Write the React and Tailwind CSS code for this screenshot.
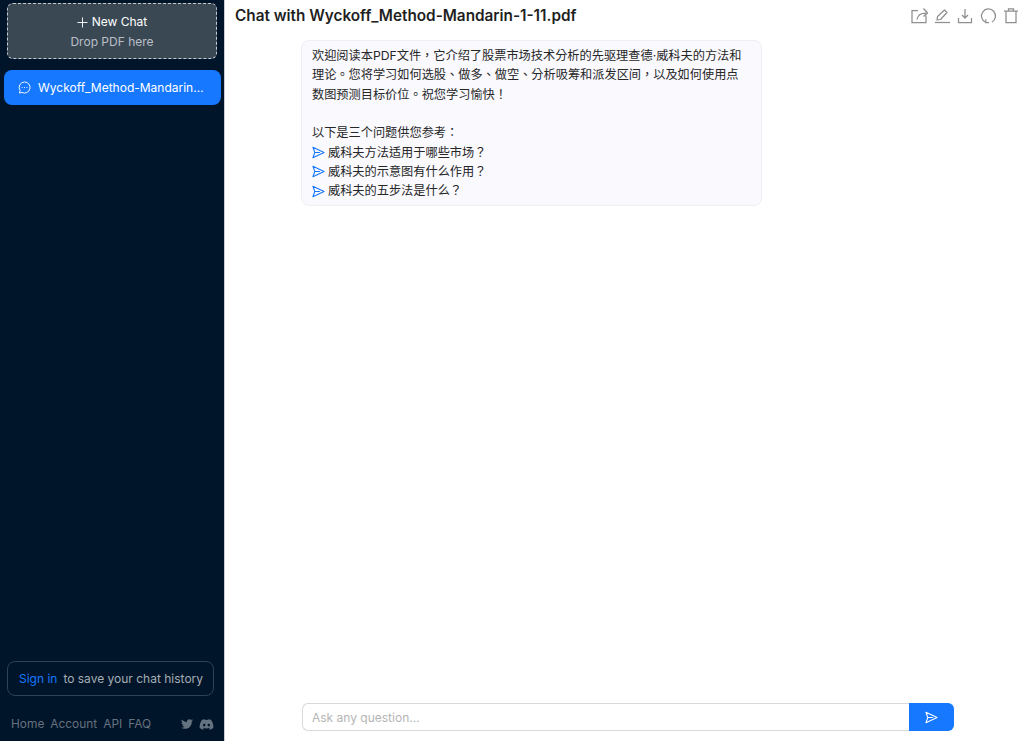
import React from 'react';
import { FaTwitter, FaDiscord } from 'react-icons/fa';

const cjkFont = { fontFamily: 'Inter, "Noto Sans CJK TC", sans-serif' };

const SendIcon = ({ className }) => (
  <svg viewBox="0 0 14 14" fill="none" stroke="currentColor" strokeWidth="1.1" strokeLinejoin="round" className={className}>
    <path d="M1 1.3 L13 7 L1 12.7 L3 7 Z" />
    <path d="M3 7 H8.5" />
  </svg>
);

const ToolIcon = ({ children }) => (
  <svg viewBox="0 0 18 18" fill="none" stroke="currentColor" strokeWidth="1.25" className="w-[18px] h-[18px] text-[#8f8f8f]">
    {children}
  </svg>
);

const questions = ['威科夫方法适用于哪些市场？', '威科夫的示意图有什么作用？', '威科夫的五步法是什么？'];

function Sidebar() {
  return (
    <div className="w-[225px] shrink-0 h-full bg-[#001529] border-r border-[#c9ced6] flex flex-col">
      <div className="ml-[7px] mt-[3px] mr-[7px] h-[56px] pt-[2px] rounded-md border border-dashed border-[#c4cad0] bg-[#3a4854] flex flex-col items-center justify-center text-[12px] leading-[20px]">
        <div className="text-white flex items-center gap-1">
          <svg viewBox="0 0 12 12" stroke="currentColor" strokeWidth="1" className="w-[11px] h-[11px]">
            <path d="M6 .5V11.5M.5 6H11.5" />
          </svg>
          New Chat
        </div>
        <div className="text-[#b9bfc5]">Drop PDF here</div>
      </div>
      <div className="ml-1 mr-[3px] mt-[11px] h-[35px] rounded-lg bg-[#1677ff] text-white text-[12px] flex items-center pl-[14px]">
        <svg viewBox="0 0 14 14" fill="none" stroke="currentColor" strokeWidth="1" className="w-[13px] h-[13px] shrink-0">
          <path d="M7 1a6 6 0 1 1-2.8 11.3L1.6 13l.7-2.6A6 6 0 0 1 7 1Z" strokeLinejoin="round" />
          <circle cx="4.4" cy="7" r=".6" fill="currentColor" stroke="none" />
          <circle cx="7" cy="7" r=".6" fill="currentColor" stroke="none" />
          <circle cx="9.6" cy="7" r=".6" fill="currentColor" stroke="none" />
        </svg>
        <span className="ml-[7px] truncate w-[168px]">Wyckoff_Method-Mandarin-1-11.pdf</span>
      </div>
      <div className="mt-auto ml-[7px] mr-[10px] h-[35px] pl-[1px] rounded-lg border border-[#2d4257] flex items-center justify-center text-[12px] text-[#a6adb4]">
        <span className="text-[#1677ff]">Sign in</span>
        <span className="ml-[6px]">to save your chat history</span>
      </div>
      <div className="h-[18px] mt-[19px] mb-[8px] flex items-center pl-[11px] pr-[10px] text-[11.9px] text-[#65727f] gap-[6px]">
        <span>Home</span>
        <span>Account</span>
        <span>API</span>
        <span>FAQ</span>
        <div className="ml-auto flex items-center gap-[6px]">
          <FaTwitter className="w-[12px] h-[12px]" />
          <FaDiscord className="w-[15px] h-[15px]" />
        </div>
      </div>
    </div>
  );
}

function Header() {
  return (
    <div className="h-[31px] flex items-center pl-[10px] pr-[4px] justify-between">
      <div className="mt-[1px] text-[15.3px] font-semibold text-[#1f1f1f]">Chat with Wyckoff_Method-Mandarin-1-11.pdf</div>
      <div className="flex items-center gap-[5px]">
        <ToolIcon>
          <path d="M8 3.5H2V15.5H16V8.5" />
          <path d="M7 12.5c.5-4 3.5-6.5 9-6.5M13.5 1.5l4 4.5-4 3.5" />
        </ToolIcon>
        <ToolIcon>
          <path d="M4.5 9.5 11.5 3l2.5 2.5L7.5 12.5l-3.5 .5Z" strokeLinejoin="round" />
          <path d="M2 15.5H17" />
        </ToolIcon>
        <ToolIcon>
          <path d="M9 2V11M6 8 9 11l3-3" />
          <path d="M2.5 11V15.5H15.5V11" />
        </ToolIcon>
        <ToolIcon>
          <path d="M6.5 15.3A7 7 0 1 1 13 15" />
          <path d="M6.8 12.3V15.6H10" />
        </ToolIcon>
        <ToolIcon>
          <path d="M2 4H16M6.5 4V1.8H11.5V4M4 4V15.5H14V4" />
        </ToolIcon>
      </div>
    </div>
  );
}

function Bubble() {
  return (
    <div className="ml-[76px] mt-[9px] w-[461px] h-[166px] rounded-lg border border-[#eeeef4] bg-[#f9f9fe] pl-[10px] pr-[14px] pt-[5px] pb-[3px] text-[12.2px] leading-[19.4px] text-[#262626]" style={cjkFont}>
      <div>欢迎阅读本PDF文件，它介绍了股票市场技术分析的先驱理查德·威科夫的方法和理论。您将学习如何选股、做多、做空、分析吸筹和派发区间，以及如何使用点数图预测目标价位。祝您学习愉快！</div>
      <div className="mt-[19px]">以下是三个问题供您参考：</div>
      {questions.map((q) => (
        <div key={q} className="flex items-center">
          <SendIcon className="w-[13px] h-[13px] text-[#1677ff] mr-[3px]" />
          {q}
        </div>
      ))}
    </div>
  );
}

function InputBar() {
  return (
    <div className="ml-[77px] mb-[10px] w-[652px] h-[28px] flex">
      <div className="flex-1 rounded-l-md border border-r-0 border-[#d9d9d9] bg-white flex items-center pl-[9px] pt-[1px] text-[12px] text-[#b5b5b5]">
        Ask any question...
      </div>
      <div className="w-[45px] rounded-r-md bg-[#1677ff] flex items-center justify-center text-white">
        <SendIcon className="w-[13px] h-[13px]" />
      </div>
    </div>
  );
}

export default function App() {
  return (
    <div className="w-[1024px] h-[741px] flex overflow-hidden bg-white" style={{ fontFamily: 'Inter, sans-serif' }}>
      <Sidebar />
      <div className="flex-1 flex flex-col">
        <Header />
        <Bubble />
        <div className="mt-auto">
          <InputBar />
        </div>
      </div>
    </div>
  );
}
